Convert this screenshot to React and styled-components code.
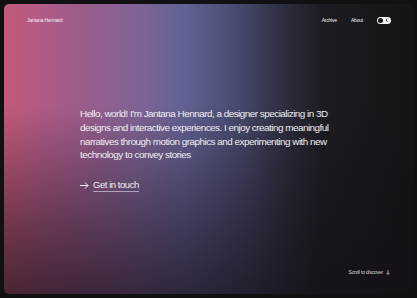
import styled, { createGlobalStyle } from 'styled-components';

const GlobalStyle = createGlobalStyle`
  html, body {
    margin: 0;
    padding: 0;
    background: #111113;
  }
  body {
    font-family: 'Liberation Sans', Arial, sans-serif;
  }
`;

const Frame = styled.div`
  box-sizing: border-box;
  width: 417px;
  height: 298px;
  padding: 4px;
  background: #111113;
`;

const Panel = styled.main`
  box-sizing: border-box;
  height: 100%;
  border-radius: 5px;
  overflow: hidden;
  display: flex;
  flex-direction: column;
  padding: 0 22px 0 23px;
  color: #f1eef2;
  background:
    linear-gradient(to bottom, rgba(18, 14, 20, 0) 35%, rgba(22, 14, 22, 0.45) 75%, rgba(22, 14, 22, 0.7) 100%),
    linear-gradient(to right, #c4597d 0%, #a25c8a 16%, #7e6496 33%, #626294 44%, #45486a 58%, #2a2a38 70%, #1c1c22 78%, #141417 100%);
`;

const Header = styled.header`
  display: flex;
  align-items: center;
  height: 32px;
  font-size: 5px;
  letter-spacing: -0.2px;
`;

const Name = styled.span`
  flex: 1;
`;

const Nav = styled.nav`
  display: flex;
  align-items: center;
  gap: 14px;
`;

const Toggle = styled.span`
  display: inline-flex;
  align-items: center;
  justify-content: space-between;
  box-sizing: border-box;
  width: 14px;
  height: 7px;
  padding: 1px 2px 1px 1px;
  border-radius: 4px;
  background: #f4f2f4;
`;

const Knob = styled.span`
  width: 5px;
  height: 5px;
  border-radius: 50%;
  background: #151517;
`;

const Intro = styled.section`
  flex: 1;
  display: flex;
  flex-direction: column;
  justify-content: center;
  padding: 8px 0 0 53px;
`;

const Lead = styled.p`
  margin: 0;
  max-width: 262px;
  font-size: 9.9px;
  line-height: 13.7px;
  letter-spacing: -0.5px;
  color: #f0eef2;
`;

const Contact = styled.a`
  display: inline-flex;
  align-items: center;
  gap: 4px;
  margin-top: 17px;
  font-size: 9.5px;
  color: #f0eef2;
  text-decoration: none;
  letter-spacing: -0.45px;
`;

const Underlined = styled.span`
  border-bottom: 1px solid rgba(240, 238, 242, 0.55);
  padding-bottom: 1px;
`;

const Footer = styled.footer`
  display: flex;
  justify-content: flex-end;
  align-items: center;
  gap: 3px;
  height: 38px;
  padding: 0 1px 6px 0;
  box-sizing: border-box;
  font-size: 5px;
  letter-spacing: -0.2px;
  color: #d8d6da;
`;

export default function App() {
  return (
    <>
      <GlobalStyle />
      <Frame>
        <Panel>
          <Header>
            <Name>Jantana Hennard</Name>
            <Nav>
              <span>Archive</span>
              <span>About</span>
              <Toggle>
                <Knob />
                <svg width="4" height="4" viewBox="0 0 10 10">
                  <path d="M7 1a4 4 0 1 0 2 7 3.2 3.2 0 0 1-2-7z" fill="#151517" />
                </svg>
              </Toggle>
            </Nav>
          </Header>
          <Intro>
            <Lead>
              Hello, world! I'm Jantana Hennard, a designer specializing in 3D designs and interactive
              experiences. I enjoy creating meaningful narratives through motion graphics and
              experimenting with new technology to convey stories
            </Lead>
            <div>
              <Contact href="#">
                <svg width="9" height="7" viewBox="0 0 9 7" fill="none" stroke="#f0eef2" strokeWidth="1">
                  <path d="M0 3.5h8M5 0.5l3 3-3 3" />
                </svg>
                <Underlined>Get in touch</Underlined>
              </Contact>
            </div>
          </Intro>
          <Footer>
            <span>Scroll to discover</span>
            <svg width="4" height="5" viewBox="0 0 4 5" fill="none" stroke="#d8d6da" strokeWidth="0.7">
              <path d="M2 0v4.5M0.5 3l1.5 1.5L3.5 3" />
            </svg>
          </Footer>
        </Panel>
      </Frame>
    </>
  );
}
